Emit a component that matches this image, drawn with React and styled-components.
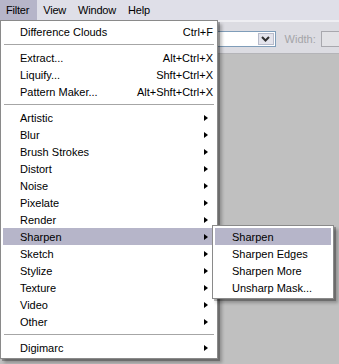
import React from 'react'
import styled, { createGlobalStyle } from "styled-components";

const GlobalStyle = createGlobalStyle`
  html, body {
    margin: 0;
    padding: 0;
    background: #c0c0c0;
    overflow: hidden;
  }
  body {
    font-family: "Liberation Sans", Arial, sans-serif;
    font-size: 11px;
    color: #000;
  }
`;

const menuItems = [
  { label: "Difference Clouds", shortcut: "Ctrl+F" },
  { sep: true },
  { label: "Extract...", shortcut: "Alt+Ctrl+X" },
  { label: "Liquify...", shortcut: "Shft+Ctrl+X" },
  { label: "Pattern Maker...", shortcut: "Alt+Shft+Ctrl+X" },
  { sep: true },
  { label: "Artistic", sub: true },
  { label: "Blur", sub: true },
  { label: "Brush Strokes", sub: true },
  { label: "Distort", sub: true },
  { label: "Noise", sub: true },
  { label: "Pixelate", sub: true },
  { label: "Render", sub: true },
  { label: "Sharpen", sub: true, open: true },
  { label: "Sketch", sub: true },
  { label: "Stylize", sub: true },
  { label: "Texture", sub: true },
  { label: "Video", sub: true },
  { label: "Other", sub: true },
  { sep: true },
  { label: "Digimarc", sub: true },
];

const sharpenItems = ["Sharpen", "Sharpen Edges", "Sharpen More", "Unsharp Mask..."];

function Chevron() {
  return (
    <svg width="9" height="6" viewBox="0 0 9 6">
      <path d="M1 1 L4.5 4.5 L8 1" fill="none" stroke="#303030" strokeWidth="2" />
    </svg>
  );
}

function App() {
  return (
    <>
      <GlobalStyle />
      <Screen>
        <MenuBar>
          <BarItem $active>Filter</BarItem>
          <BarItem>View</BarItem>
          <BarItem>Window</BarItem>
          <BarItem>Help</BarItem>
        </MenuBar>
        <OptionsBar>
          <Field>
            <DropButton>
              <Chevron />
            </DropButton>
          </Field>
          <DimLabel>Width:</DimLabel>
          <SmallBox />
        </OptionsBar>
        <Canvas />

        <Menu>
          {menuItems.map((item, i) =>
            item.sep ? (
              <Separator key={i} />
            ) : (
              <Row key={i} $selected={item.open}>
                <Label>{item.label}</Label>
                {item.shortcut && <Shortcut>{item.shortcut}</Shortcut>}
                {item.sub && <Arrow />}
                {item.open && (
                  <SubMenu>
                    {sharpenItems.map((s, j) => (
                      <SubRow key={s} $selected={j === 0}>
                        {s}
                      </SubRow>
                    ))}
                  </SubMenu>
                )}
              </Row>
            )
          )}
        </Menu>
      </Screen>
    </>
  );
}

const Screen = styled.div`
  position: relative;
  width: 339px;
  height: 364px;
  display: flex;
  flex-direction: column;
  background: #c0c0c0;
`;

const MenuBar = styled.div`
  height: 20px;
  display: flex;
  align-items: stretch;
  background: #dfdfe8;
`;

const BarItem = styled.div`
  display: flex;
  align-items: center;
  padding: 0 6px;
  letter-spacing: -0.2px;
  background: ${(p) => (p.$active ? "#b6b5c9" : "transparent")};
  &:first-child {
    padding: 0 8px 0 6px;
  }
`;

const OptionsBar = styled.div`
  height: 31px;
  display: flex;
  align-items: center;
  padding-left: 140px;
  background: #dcdce2;
  border-top: 2px solid #eeeef2;
  border-bottom: 1px solid #b4b4b8;
`;

const Field = styled.div`
  width: 149px;
  height: 16px;
  box-sizing: border-box;
  background: #fff;
  border: 1px solid #7f9db9;
  display: flex;
  justify-content: flex-end;
  align-items: center;
  padding-right: 1px;
  margin-top: 2px;
`;

const DropButton = styled.div`
  width: 16px;
  height: 12px;
  display: flex;
  align-items: center;
  justify-content: center;
  background: #e4e4ec;
  border: 1px solid #b8bccb;
  box-sizing: border-box;
`;

const DimLabel = styled.div`
  margin-left: 9px;
  margin-top: 2px;
  color: #a4a4a8;
`;

const SmallBox = styled.div`
  margin-left: 5px;
  margin-top: 2px;
  width: 20px;
  height: 16px;
  box-sizing: border-box;
  border: 1px solid #a8a8ae;
  border-right: none;
  background: #e2e2e6;
`;

const Canvas = styled.div`
  flex: 1;
  background: #c0c0c0;
`;

const Menu = styled.div`
  position: absolute;
  top: 20px;
  left: 0;
  width: 218px;
  box-sizing: border-box;
  padding: 2px;
  background: #fff;
  border: 1px solid #8a8a8a;
  box-shadow: 2px 2px 0 rgba(0, 0, 0, 0.25), 4px 4px 3px rgba(0, 0, 0, 0.25);
`;

const Row = styled.div`
  position: relative;
  height: 17px;
  display: flex;
  align-items: center;
  padding: 0 2px 0 17px;
  background: ${(p) => (p.$selected ? "#b6b5c9" : "transparent")};
`;

const Label = styled.span`
  flex: 1;
  white-space: nowrap;
`;

const Shortcut = styled.span`
  white-space: nowrap;
`;

const Arrow = styled.span`
  width: 0;
  height: 0;
  border-top: 3.5px solid transparent;
  border-bottom: 3.5px solid transparent;
  border-left: 4px solid #000;
  margin-right: 5px;
`;

const Separator = styled.div`
  height: 9px;
  display: flex;
  align-items: center;
  &::after {
    content: "";
    flex: 1;
    margin: 0 1px;
    border-top: 1px solid #a6a6a6;
  }
`;

const SubMenu = styled.div`
  position: absolute;
  left: 209px;
  top: -3px;
  width: 122px;
  box-sizing: border-box;
  padding: 2px;
  background: #fff;
  border: 1px solid #8a8a8a;
  box-shadow: 2px 2px 0 rgba(0, 0, 0, 0.25), 4px 4px 3px rgba(0, 0, 0, 0.25);
  z-index: 2;
`;

const SubRow = styled.div`
  height: 17px;
  display: flex;
  align-items: center;
  padding-left: 17px;
  white-space: nowrap;
  background: ${(p) => (p.$selected ? "#b6b5c9" : "transparent")};
`;

export default App
